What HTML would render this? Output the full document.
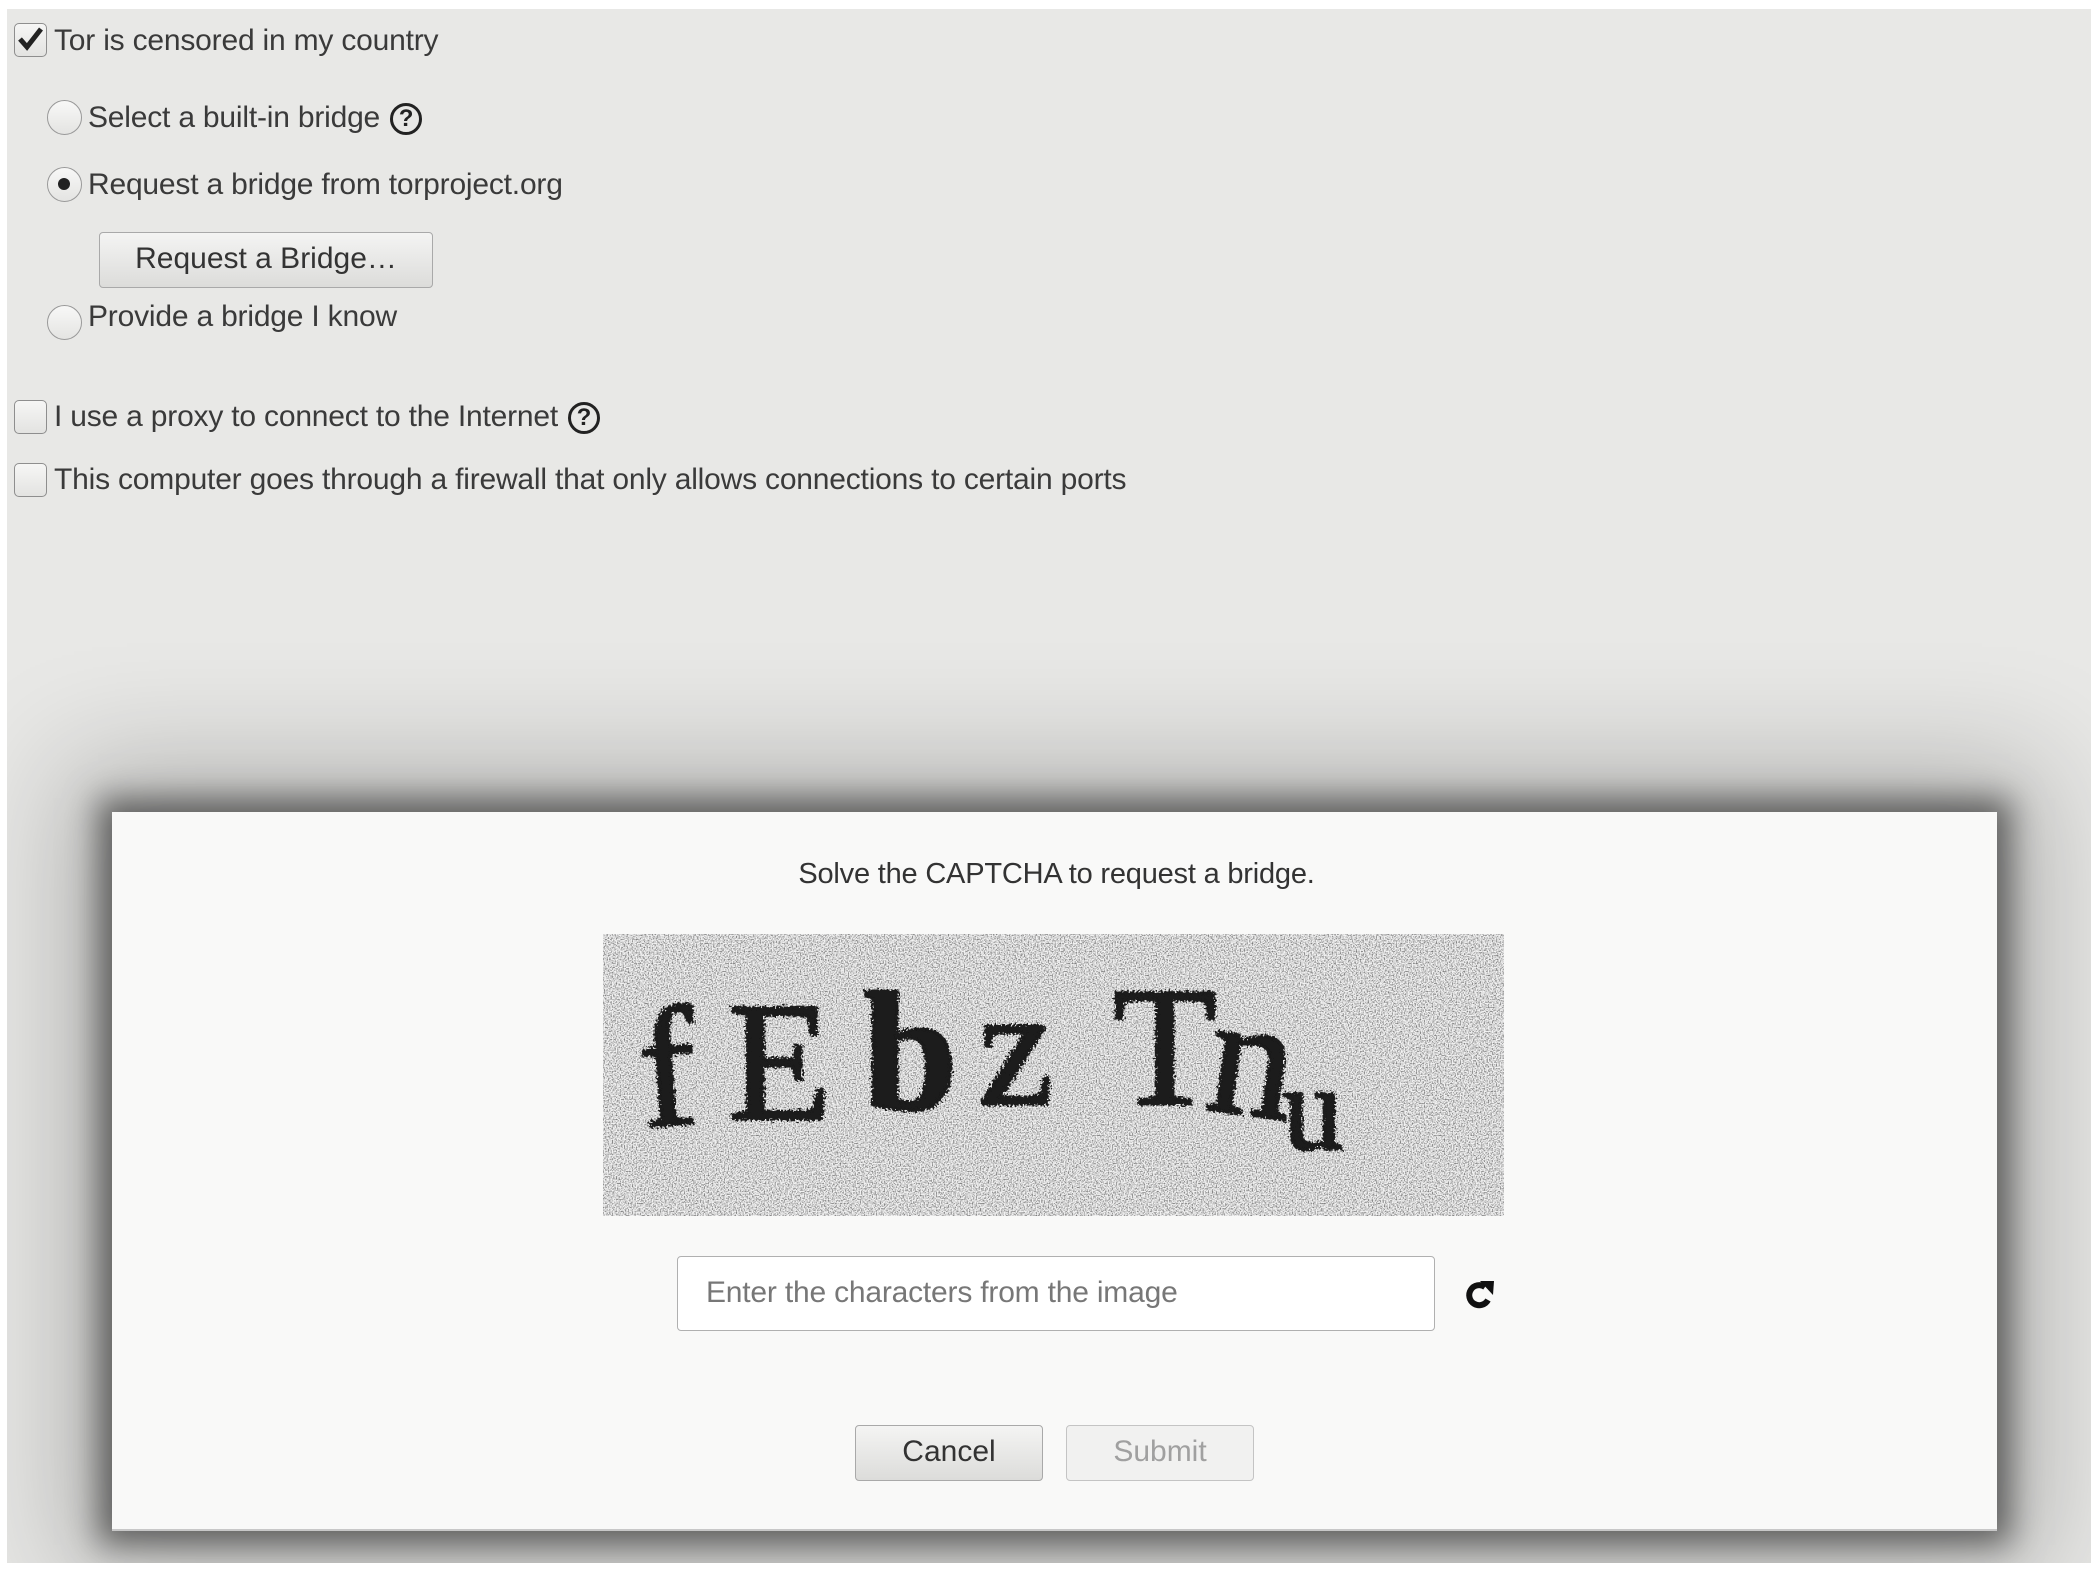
<!DOCTYPE html>
<html><head><meta charset="utf-8"><style>
html,body{margin:0;padding:0;width:2098px;height:1569px;background:#fff;overflow:hidden;font-family:"Liberation Sans",sans-serif;}
#bg{position:absolute;left:7px;top:9px;width:2084px;height:1554px;background:#e8e8e6;overflow:hidden;}
.t{position:absolute;font-size:30px;color:#3a3a3a;white-space:nowrap;line-height:34px;letter-spacing:-0.2px;}
.cb{position:absolute;width:33px;height:34px;border:1.5px solid #8e8e8e;border-radius:5px;background:linear-gradient(#f6f6f5,#e3e3e1);box-sizing:border-box;}
.rb{position:absolute;width:35px;height:35px;border:1.5px solid #999;border-radius:50%;background:linear-gradient(#f8f8f7,#e4e4e2);box-sizing:border-box;}
.q{display:inline-block;width:32px;height:32px;border:3px solid #222;border-radius:50%;box-sizing:border-box;text-align:center;font-size:24px;line-height:26px;font-weight:bold;color:#222;vertical-align:1px;margin-left:10px;letter-spacing:0}
.btn{position:absolute;box-sizing:border-box;border:1.5px solid #a9a9a9;border-radius:4px;background:linear-gradient(#f4f4f3,#dcdcda);font-size:30px;color:#333;text-align:center;}
#dlg{position:absolute;left:105px;top:803px;width:1885px;height:717px;background:#f9f9f8;box-shadow:0 0 30px 14px rgba(0,0,0,0.5), 0 0 110px 50px rgba(0,0,0,0.22);border-bottom:2px solid #c8c8c8;}
</style></head><body>
<div id="bg">
  <div class="cb" style="left:7px;top:14px;"><svg width="30" height="30" viewBox="0 0 30 30" style="position:absolute;left:0;top:0"><path d="M5 15 L12 23 L26 5" fill="none" stroke="#222" stroke-width="5" stroke-linejoin="miter"/></svg></div>
  <div class="t" style="left:47px;top:15px;">Tor is censored in my country</div>

  <div class="rb" style="left:40px;top:91px;"></div>
  <div class="t" style="left:81px;top:92px;">Select a built-in bridge<span class="q">?</span></div>

  <div class="rb" style="left:40px;top:158px;"><div style="position:absolute;left:10px;top:10px;width:12px;height:12px;border-radius:50%;background:#222"></div></div>
  <div class="t" style="left:81px;top:159px;">Request a bridge from torproject.org</div>

  <div class="btn" style="left:92px;top:223px;width:334px;height:56px;line-height:52px;">Request a Bridge…</div>

  <div class="rb" style="left:40px;top:296px;"></div>
  <div class="t" style="left:81px;top:291px;">Provide a bridge I know</div>

  <div class="cb" style="left:7px;top:391px;"></div>
  <div class="t" style="left:47px;top:391px;">I use a proxy to connect to the Internet<span class="q">?</span></div>

  <div class="cb" style="left:7px;top:454px;"></div>
  <div class="t" style="left:47px;top:454px;">This computer goes through a firewall that only allows connections to certain ports</div>

  <div id="dlg">
    <div style="position:absolute;left:2px;width:100%;top:46px;text-align:center;font-size:29px;color:#333;letter-spacing:-0.2px;">Solve the CAPTCHA to request a bridge.</div>
    <svg style="position:absolute;left:491px;top:122px" width="901" height="282" viewBox="0 0 901 282">
      <defs><filter id="n" x="0" y="0" width="100%" height="100%"><feTurbulence type="fractalNoise" baseFrequency="0.75" numOctaves="1" seed="4"/><feColorMatrix type="matrix" values="0 0 0 0 0.2  0 0 0 0 0.2  0 0 0 0 0.2  3.2 0 0 0 -1.35"/></filter>
      <filter id="r"><feTurbulence type="fractalNoise" baseFrequency="0.5" seed="2"/><feDisplacementMap in="SourceGraphic" scale="10"/></filter></defs>
      <rect width="901" height="282" fill="#f2f2f2"/>
      <rect width="901" height="282" filter="url(#n)"/>
      <g filter="url(#r)" font-family="Liberation Serif,serif" fill="#1a1a1a" stroke="#1a1a1a" stroke-width="3" font-size="170">
        <text x="40" y="190" transform="rotate(-4 80 190)">f</text>
        <text x="125" y="185">E</text>
        <text x="260" y="175" font-weight="bold">b</text>
        <text x="375" y="170">z</text>
        <text x="510" y="170">T</text>
        <text x="600" y="180" transform="rotate(8 640 180)">n</text>
        <text x="680" y="215" font-size="120">u</text>
      </g>
    </svg>
    <div style="position:absolute;left:565px;top:444px;width:758px;height:75px;box-sizing:border-box;border:1.5px solid #b0b0b0;border-radius:4px;background:#fff;font-size:30px;color:#777;line-height:72px;padding-left:28px;letter-spacing:-0.2px;">Enter the characters from the image</div>
    <svg style="position:absolute;left:1352px;top:467px" width="32" height="33" viewBox="0 0 32 33"><path d="M24 21 A10 10 0 1 1 21 8" fill="none" stroke="#111" stroke-width="6"/><path d="M16 2 L30 2 L29 16 Z" fill="#111"/></svg>
    <div class="btn" style="left:743px;top:613px;width:188px;height:56px;line-height:52px;color:#333;">Cancel</div>
    <div class="btn" style="left:954px;top:613px;width:188px;height:56px;line-height:52px;color:#a0a0a0;background:#f1f1f0;border-color:#c4c4c4;">Submit</div>
  </div>
</div>
</body></html>
